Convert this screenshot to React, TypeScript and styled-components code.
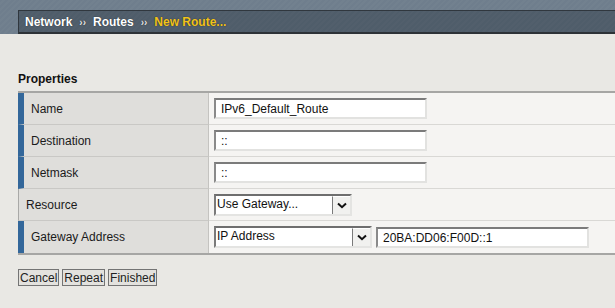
import React from 'react';
import styled, { createGlobalStyle } from 'styled-components';

const Global = createGlobalStyle`
  body {
    margin: 0;
    background: #e9e8e4;
    font-family: "Liberation Sans", Arial, sans-serif;
    color: #1f1f1f;
  }
`;

const Band = styled.div`
  padding: 10px 0 0 18px;
  background: repeating-linear-gradient(135deg, #6f7e8d 0 2px, #72818f 2px 4px);
`;

const Crumbs = styled.div`
  height: 21px;
  display: flex;
  align-items: center;
  gap: 7px;
  padding-left: 6px;
  background: repeating-linear-gradient(135deg, #4f5d6a 0 2px, #525f6c 2px 4px);
  border-top: 1px solid #30373e;
  border-left: 1px solid #30373e;
  border-bottom: 2px solid #2d3237;
  font-size: 12px;
  font-weight: bold;
  color: #fff;
  text-shadow: 0 0 1px #1c2228;
`;

const Sep = styled.span`
  font-size: 10px;
  color: #e6e6e6;
  padding: 2px 0 0;
`;

const Current = styled.span`
  color: #f2c31a;
`;

const Main = styled.div`
  padding: 38px 0 0 18px;
`;

const Title = styled.div`
  font-size: 12px;
  font-weight: bold;
  color: #111;
  height: 15px;
  margin-bottom: 4px;
`;

const Table = styled.div`
  display: grid;
  grid-template-columns: 191px 1fr;
  border-top: 2px solid #a6a6a4;
  border-bottom: 2px solid #a6a6a4;
`;

const Label = styled.div<{ $req?: boolean }>`
  height: 31px;
  display: flex;
  align-items: center;
  padding-left: 7px;
  background: #dfdedb;
  border-left: ${p => (p.$req ? '6px solid #33679a' : '1px solid #a9a9a7')};
  border-right: 1px solid #c4c3c0;
  border-bottom: 1px solid #c9c8c5;
  font-size: 12px;
  color: #1a1a1a;
  &:nth-last-child(2) {
    border-bottom: none;
    height: 32px;
  }
`;

const Value = styled.div`
  height: 31px;
  display: flex;
  align-items: center;
  gap: 4px;
  padding-left: 5px;
  background: #f5f4f2;
  border-bottom: 1px solid #d9d8d5;
  &:last-child {
    border-bottom: none;
    height: 32px;
  }
`;

const Input = styled.div<{ $w: number }>`
  box-sizing: border-box;
  width: ${p => p.$w}px;
  height: 21px;
  background: #fff;
  border-top: 2px solid #7b7b7b;
  border-left: 2px solid #8a8a8a;
  border-right: 2px solid #e2e2e0;
  border-bottom: 2px solid #e2e2e0;
  padding: 0 0 0 5px;
  font-size: 12px;
  line-height: 18px;
  color: #111;
  white-space: nowrap;
`;

const Select = styled.div<{ $w: number }>`
  box-sizing: border-box;
  width: ${p => p.$w}px;
  height: 22px;
  display: flex;
  background: #fff;
  border-top: 2px solid #6e6e6e;
  border-left: 2px solid #7a7a7a;
  border-right: 2px solid #e4e4e2;
  border-bottom: 2px solid #e4e4e2;
  font-size: 12px;
  color: #111;
`;

const SelectText = styled.div`
  flex: 1;
  padding-left: 1px;
  line-height: 17px;
`;

const Arrow = styled.div`
  width: 17px;
  display: flex;
  align-items: center;
  justify-content: center;
  background: #f1f1ef;
  border-left: 1px solid #7a7a7a;
  border-top: 1px solid #fff;
`;

const Buttons = styled.div`
  display: flex;
  gap: 3px;
  margin-top: 14px;
`;

const Button = styled.button`
  font-family: "Liberation Sans", Arial, sans-serif;
  font-size: 12px;
  color: #222;
  height: 17px;
  padding: 0 1px;
  line-height: 14px;
  background: #e3e2de;
  border: 1px solid #747474;
  border-radius: 0;
`;

const Chevron = () => (
  <svg width="10" height="7" viewBox="0 0 10 7">
    <path d="M1 1.5 L5 5.2 L9 1.5" stroke="#111" strokeWidth="2" fill="none" />
  </svg>
);

function App() {
  return (
    <>
      <Global />
      <Band>
        <Crumbs>
          <span>Network</span>
          <Sep>››</Sep>
          <span>Routes</span>
          <Sep>››</Sep>
          <Current>New Route...</Current>
        </Crumbs>
      </Band>
      <Main>
        <Title>Properties</Title>
        <Table>
          <Label $req>Name</Label>
          <Value>
            <Input $w={213}>IPv6_Default_Route</Input>
          </Value>
          <Label $req>Destination</Label>
          <Value>
            <Input $w={213}>::</Input>
          </Value>
          <Label $req>Netmask</Label>
          <Value>
            <Input $w={213}>::</Input>
          </Value>
          <Label>Resource</Label>
          <Value>
            <Select $w={138}>
              <SelectText>Use Gateway...</SelectText>
              <Arrow><Chevron /></Arrow>
            </Select>
          </Value>
          <Label $req>Gateway Address</Label>
          <Value>
            <Select $w={158}>
              <SelectText>IP Address</SelectText>
              <Arrow><Chevron /></Arrow>
            </Select>
            <Input $w={213}>20BA:DD06:F00D::1</Input>
          </Value>
        </Table>
        <Buttons>
          <Button>Cancel</Button>
          <Button>Repeat</Button>
          <Button>Finished</Button>
        </Buttons>
      </Main>
    </>
  );
}

export default App;
